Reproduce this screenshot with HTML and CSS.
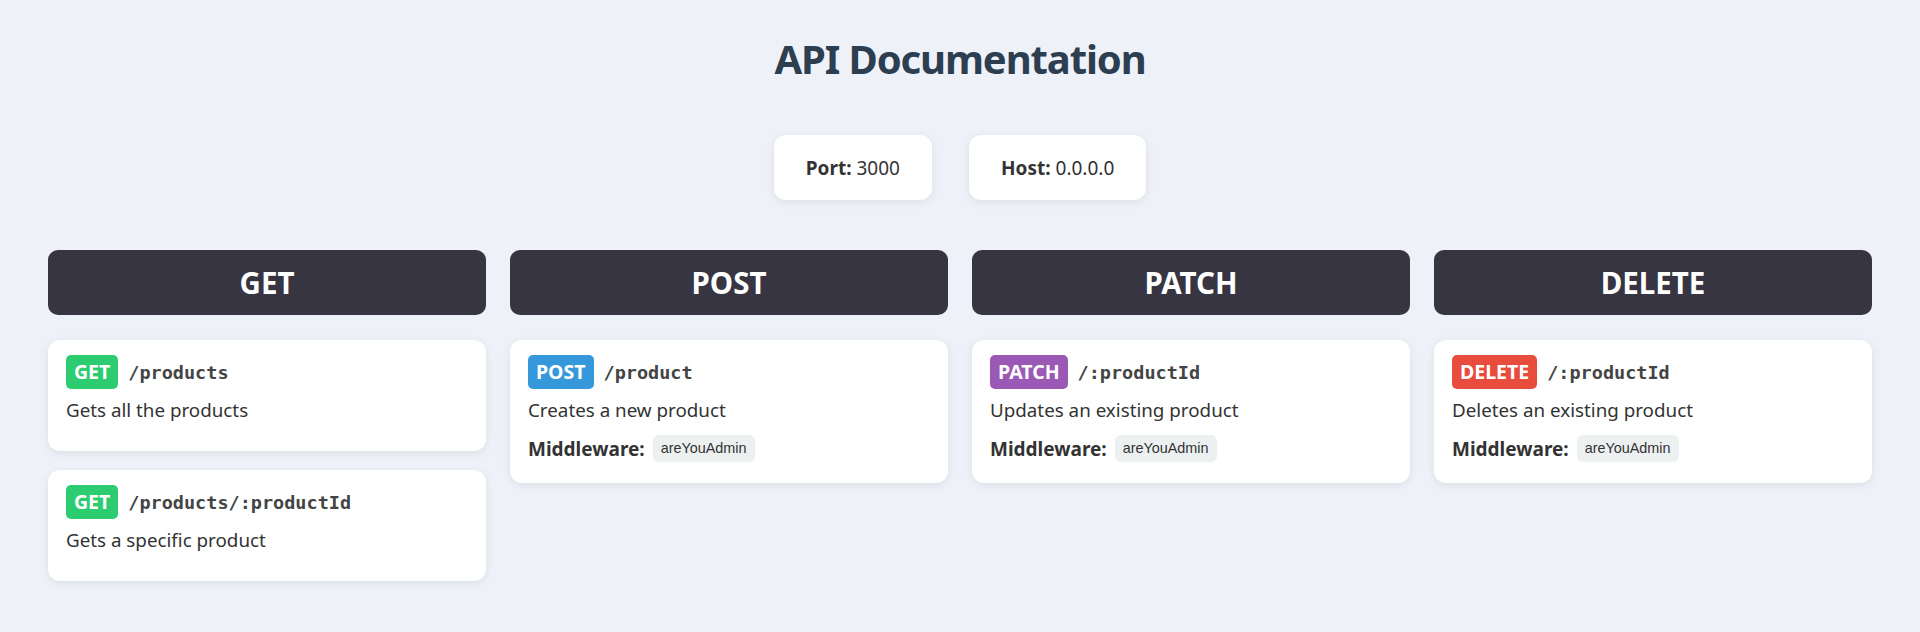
FILE: index.html
```html
<!DOCTYPE html>
<html lang="en">
<head>
<meta charset="utf-8">
<title>API Documentation</title>
<link rel="stylesheet" href="styles.css">
</head>
<body>
<div class="page">
  <h1 class="title">API Documentation</h1>
  <div class="info">
    <div class="info-box"><strong>Port:</strong> 3000</div>
    <div class="info-box"><strong>Host:</strong> 0.0.0.0</div>
  </div>
  <div class="columns">
    <section class="column">
      <h2 class="col-head">GET</h2>
      <div class="card">
        <div class="route"><span class="badge get">GET</span><code class="path">/products</code></div>
        <p class="desc">Gets all the products</p>
      </div>
      <div class="card">
        <div class="route"><span class="badge get">GET</span><code class="path">/products/:productId</code></div>
        <p class="desc">Gets a specific product</p>
      </div>
    </section>
    <section class="column">
      <h2 class="col-head">POST</h2>
      <div class="card">
        <div class="route"><span class="badge post">POST</span><code class="path">/product</code></div>
        <p class="desc">Creates a new product</p>
        <div class="mw"><strong>Middleware:</strong><span class="tag">areYouAdmin</span></div>
      </div>
    </section>
    <section class="column">
      <h2 class="col-head">PATCH</h2>
      <div class="card">
        <div class="route"><span class="badge patch">PATCH</span><code class="path">/:productId</code></div>
        <p class="desc">Updates an existing product</p>
        <div class="mw"><strong>Middleware:</strong><span class="tag">areYouAdmin</span></div>
      </div>
    </section>
    <section class="column">
      <h2 class="col-head">DELETE</h2>
      <div class="card">
        <div class="route"><span class="badge delete">DELETE</span><code class="path">/:productId</code></div>
        <p class="desc">Deletes an existing product</p>
        <div class="mw"><strong>Middleware:</strong><span class="tag">areYouAdmin</span></div>
      </div>
    </section>
  </div>
</div>
</body>
</html>
```
FILE: styles.css
```css
* { box-sizing: border-box; }
html, body { margin: 0; padding: 0; }
body {
  background: #eef1f8;
  font-family: "Noto Sans", "Open Sans", sans-serif;
  color: #333;
  font-size: 18.8px;
}
.page {
  padding: 34px 48px 40px;
}
.title {
  margin: 0;
  text-align: center;
  font-size: 40px;
  letter-spacing: -1.1px;
  font-weight: 700;
  color: #2c3e50;
  line-height: 50px;
}
.info {
  display: flex;
  justify-content: center;
  gap: 37px;
  margin-top: 51px;
}
.info-box {
  background: #fff;
  border-radius: 12px;
  padding: 0 32px;
  height: 65px;
  display: flex;
  align-items: center;
  gap: 5px;
  box-shadow: 0 2px 8px rgba(0,0,0,0.08);
  font-size: 19px;
  color: #333;
}
.columns {
  display: grid;
  grid-template-columns: repeat(4, 1fr);
  gap: 24px;
  margin-top: 50px;
  align-items: start;
}
.column {
  display: flex;
  flex-direction: column;
  gap: 19px;
}
.col-head {
  margin: 0 0 6px;
  height: 65px;
  display: flex;
  align-items: center;
  justify-content: center;
  background: #373541;
  color: #fff;
  border-radius: 10px;
  font-size: 29.5px;
  font-weight: 700;
}
.card {
  background: #fff;
  border-radius: 12px;
  padding: 15px 18px 18px;
  box-shadow: 0 2px 8px rgba(0,0,0,0.08);
}
.route {
  display: flex;
  align-items: center;
  gap: 10px;
}
.badge {
  display: inline-block;
  color: #fff;
  font-weight: 700;
  font-size: 19.5px;
  height: 34px;
  line-height: 34px;
  padding: 0 8px;
  border-radius: 5px;
}
.get { background: #2ecc71; }
.post { background: #3498db; }
.patch { background: #9b59b6; }
.delete { background: #e74c3c; }
.path {
  font-family: "DejaVu Sans Mono", "Liberation Mono", monospace;
  font-weight: 700;
  font-size: 18.5px;
  color: #444;
}
.desc {
  margin: 8px 0 10px;
  line-height: 26px;
}
.mw {
  display: flex;
  align-items: center;
  gap: 8px;
  margin-top: 12px;
  margin-bottom: 3px;
  font-size: 19px;
}
.tag {
  font-family: "Liberation Sans", Arial, sans-serif;
  font-size: 14.4px;
  line-height: 17px;
  background: #ecf0f1;
  border-radius: 6px;
  padding: 5px 8px;
  color: #333;
}
```
